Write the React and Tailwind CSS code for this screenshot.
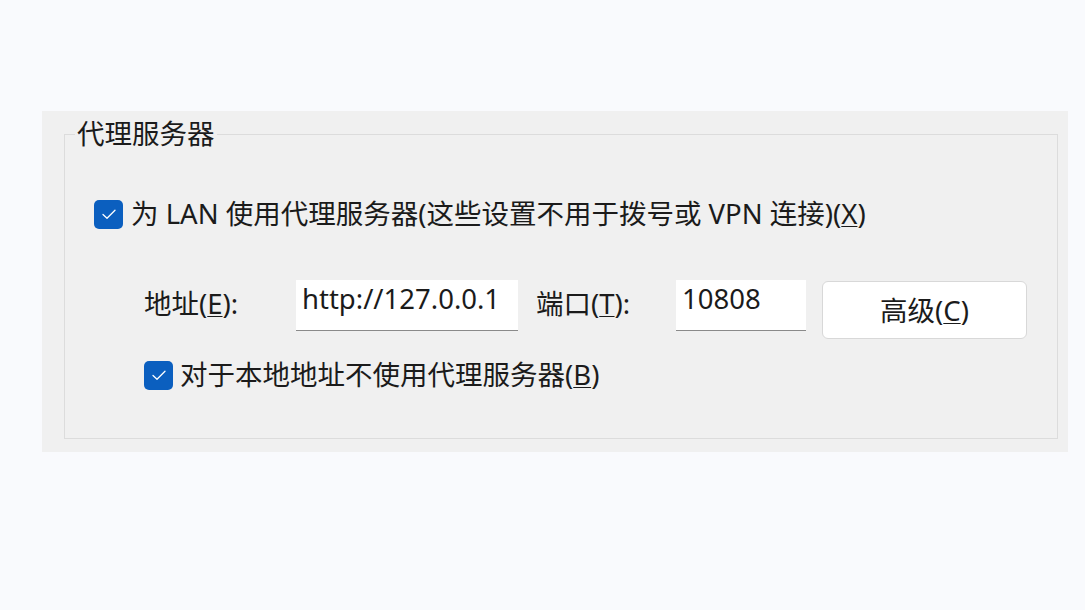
import React from "react";

const font = { fontFamily: '"Noto Sans", "Noto Sans CJK SC", sans-serif' };

const Check = () => (
  <span className="flex h-[29px] w-[29px] shrink-0 items-center justify-center rounded-[5px] bg-[#0b5fbf]">
    <svg width="20" height="20" viewBox="0 0 20 20" fill="none">
      <path d="M4 10.5l4 3.8L16 6.2" stroke="white" strokeWidth="1.3" strokeLinecap="round" strokeLinejoin="round" />
    </svg>
  </span>
);

export default function App() {
  return (
    <div className="min-h-[610px] w-[1085px] bg-[#f9fafd] pt-[111px] pl-[42px] text-[#1b1b1b]" style={font}>
      <div className="h-[341px] w-[1026px] bg-[#f0f0f0] pt-[8px] pl-[22px] pr-[10px]">
        <fieldset className="h-[320px] border border-[#dcdcdc] pl-[29px] pr-[30px]">
          <legend className="ml-[-19px] px-[2px] text-[27.5px] leading-[30px]">代理服务器</legend>

          <label className="mt-[50px] flex items-center gap-[8px] text-[27.5px] leading-[30px]">
            <Check />
            <span>
              为 LAN 使用代理服务器(这些设置不用于拨号或 VPN 连接)(<u className="decoration-1 underline-offset-2">X</u>)
            </span>
          </label>

          <div className="mt-[51px] flex items-start pl-[50px]">
            <span className="mt-[9px] w-[152px] text-[27.5px] leading-[30px]">
              地址(<u className="decoration-1 underline-offset-2">E</u>):
            </span>
            <div className="h-[51px] w-[222px] border-b border-b-[#8a8a8a] bg-white pl-[6px] pt-[2px] text-[27.5px] leading-[34px]">
              http://127.0.0.1
            </div>
            <span className="ml-[18px] mt-[9px] w-[140px] text-[27.5px] leading-[30px]">
              端口(<u className="decoration-1 underline-offset-2">T</u>):
            </span>
            <div className="h-[51px] w-[130px] border-b border-b-[#8a8a8a] bg-white pl-[6px] pt-[2px] text-[27.5px] leading-[34px]">
              10808
            </div>
            <button className="ml-[16px] mt-[1px] flex h-[58px] w-[205px] items-center justify-center rounded-[6px] border border-[#d8d8d8] bg-white pt-[2px] text-[27.5px] leading-[30px]">
              高级(<u className="decoration-1 underline-offset-2">C</u>)
            </button>
          </div>

          <label className="mt-[21px] ml-[50px] flex items-center gap-[7px] text-[27.5px] leading-[30px]">
            <Check />
            <span>
              对于本地地址不使用代理服务器(<u className="decoration-1 underline-offset-2">B</u>)
            </span>
          </label>
        </fieldset>
      </div>
    </div>
  );
}
